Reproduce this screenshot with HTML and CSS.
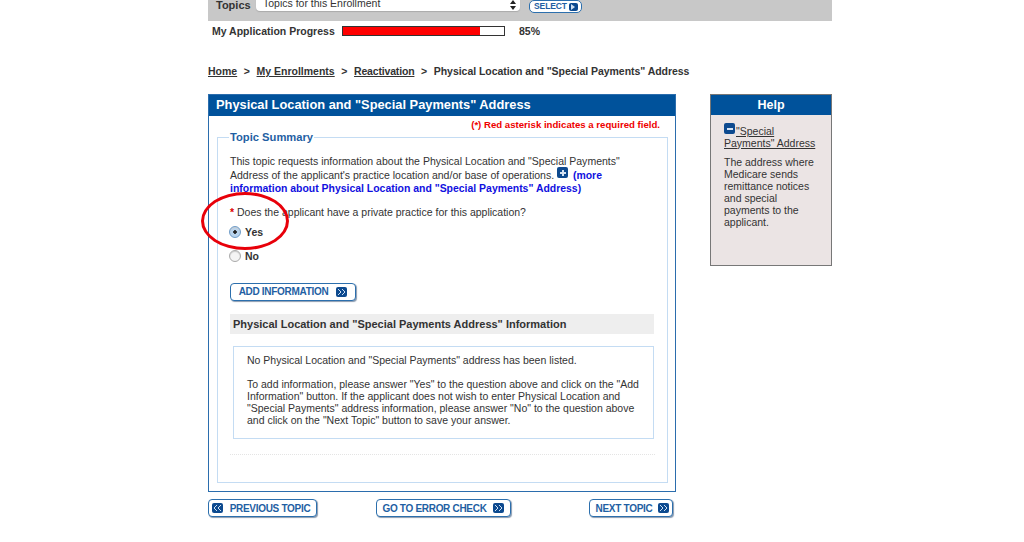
FILE: index.html

```html
<!DOCTYPE html>
<html lang="en">
<head>
    <meta charset="UTF-8">
    <title>Physical Location and "Special Payments" Address</title>
    <link rel="stylesheet" href="styles.css">
</head>
<body>
    <div class="page">
        <div class="topbar">
            <span class="topbar-label">Topics</span>
            <div class="fake-select">
                <span>Topics for this Enrollment</span>
                <svg class="updown" width="6" height="10" viewBox="0 0 6 10"><path d="M3 0l3 4H0zM3 10L0 6h6z" fill="#222"/></svg>
            </div>
            <span class="select-btn">SELECT <i class="ico ico-small"><svg width="8" height="8" viewBox="0 0 8 8"><path d="M2 1l4 3-4 3z" fill="#cfe0f2"/></svg></i></span>
        </div>

        <div class="progress-row">
            <span class="progress-label">My Application Progress</span>
            <div class="progress-track"><div class="progress-fill" style="width:85%"></div></div>
            <span class="progress-num">85%</span>
        </div>

        <div class="crumbs">
            <a href="#">Home</a><b>&gt;</b><a href="#">My Enrollments</a><b>&gt;</b><a class="crumb-tight" href="#">Reactivation</a><b>&gt;</b><span class="crumb-current">Physical Location and "Special Payments" Address</span>
        </div>

        <div class="columns">
            <div class="col-main">
                <div class="panel">
                    <h2 class="panel-title">Physical Location and "Special Payments" Address</h2>
                    <p class="req-note">(*) Red asterisk indicates a required field.</p>
                    <fieldset class="summary">
                        <legend>Topic Summary</legend>
                        <p class="intro">This topic requests information about the Physical Location and "Special Payments" Address of the applicant's practice location and/or base of operations. <i class="ico ico-mid"><svg width="8" height="8" viewBox="0 0 8 8"><path d="M3 1h2v2h2v2H5v2H3V5H1V3h2z" fill="#d5e3f3"/></svg></i> <a class="more" href="#">(more information about Physical Location and "Special Payments" Address)</a></p>
                        <p class="question"><span class="star">*</span> Does the applicant have a private practice for this application?</p>
                        <div class="radio-row"><span class="radio radio-on"></span>Yes</div>
                        <div class="radio-row radio-row-no"><span class="radio"></span>No</div>
                        <a class="btn btn-add" href="#">ADD INFORMATION <i class="ico"><svg width="9" height="8" viewBox="0 0 9 8"><path d="M1 1l3 3-3 3M5 1l3 3-3 3" fill="none" stroke="#cfe0f2"/></svg></i></a>
                        <h3 class="info-head">Physical Location and "Special Payments Address" Information</h3>
                        <div class="info-box">
                            <p>No Physical Location and "Special Payments" address has been listed.</p>
                            <p>To add information, please answer "Yes" to the question above and click on the "Add Information" button. If the applicant does not wish to enter Physical Location and "Special Payments" address information, please answer "No" to the question above and click on the "Next Topic" button to save your answer.</p>
                        </div>
                        <div class="dotted"></div>
                    </fieldset>
                </div>
                <div class="nav-btns">
                    <a class="btn btn-prev" href="#"><i class="ico"><svg width="9" height="8" viewBox="0 0 9 8"><path d="M4 1L1 4l3 3M8 1L5 4l3 3" fill="none" stroke="#cfe0f2"/></svg></i> PREVIOUS TOPIC</a>
                    <a class="btn btn-check" href="#">GO TO ERROR CHECK <i class="ico"><svg width="9" height="8" viewBox="0 0 9 8"><path d="M1 1l3 3-3 3M5 1l3 3-3 3" fill="none" stroke="#cfe0f2"/></svg></i></a>
                    <a class="btn btn-next" href="#">NEXT TOPIC <i class="ico"><svg width="9" height="8" viewBox="0 0 9 8"><path d="M1 1l3 3-3 3M5 1l3 3-3 3" fill="none" stroke="#cfe0f2"/></svg></i></a>
                </div>
            </div>

            <div class="help">
                <h2 class="help-title">Help</h2>
                <div class="help-body">
                    <p><i class="ico ico-mid"><svg width="8" height="8" viewBox="0 0 8 8"><path d="M1 3h6v2H1z" fill="#d5e3f3"/></svg></i><a href="#">"Special Payments" Address</a></p>
                    <p>The address where Medicare sends remittance notices and special payments to the applicant.</p>
                </div>
            </div>
        </div>

        <div class="red-ring"></div>
    </div>
</body>
</html>
```

FILE: styles.css

```css
html, body {
    margin: 0;
    padding: 0;
    background: #fff;
}
body {
    font-family: "Liberation Sans", Arial, sans-serif;
    font-size: 10.5px;
    color: #333;
    height: 542px;
    overflow: hidden;
}
p {
    margin: 0;
}
a {
    color: #333;
}
.page {
    position: relative;
    width: 624px;
    margin-left: 208px;
}

/* top bar */
.topbar {
    height: 21px;
    background: #c8c8c8;
    display: flex;
    align-items: flex-end;
    box-sizing: border-box;
    padding: 0 0 10px 8px;
}
.topbar-label {
    font-weight: bold;
    font-size: 11px;
    width: 40px;
    line-height: 10px;
    height: 10px;
    margin-bottom: 1px;
}
.fake-select {
    width: 264px;
    height: 12px;
    background: #fff;
    border-radius: 0 0 4px 4px;
    box-shadow: 0 1px 1px #aaa;
    display: flex;
    justify-content: space-between;
    align-items: flex-end;
    box-sizing: border-box;
    padding: 0 4px 3px 7px;
    line-height: 9px;
    margin-right: 9px;
}
.updown {
    margin-bottom: -2px;
}
.select-btn {
    height: 13px;
    width: 53px;
    box-sizing: border-box;
    margin-bottom: -2px;
    background: #fff;
    border: 1px solid #2c6fad;
    border-radius: 5px;
    color: #1f5fa3;
    font-weight: bold;
    font-size: 8.5px;
    letter-spacing: -0.1px;
    line-height: 11px;
    padding-left: 4px;
    white-space: nowrap;
    display: flex;
    align-items: center;
    gap: 2px;
}
.ico {
    display: inline-flex;
    align-items: center;
    justify-content: center;
    width: 11px;
    height: 10px;
    background: #0d4a8f;
    border-radius: 2px;
    vertical-align: middle;
}
.ico-small {
    width: 9px;
    height: 8px;
}
.ico-mid {
    width: 11px;
    height: 11px;
    vertical-align: 2px;
}

/* progress */
.progress-row {
    display: flex;
    align-items: center;
    height: 20px;
    padding-left: 4px;
}
.progress-label {
    font-weight: bold;
    width: 130px;
}
.progress-track {
    width: 161px;
    height: 8px;
    border: 1px solid #333;
    background: #fff;
}
.progress-fill {
    height: 100%;
    background: #f00;
}
.progress-num {
    font-weight: bold;
    margin-left: 14px;
}

/* breadcrumbs */
.crumbs {
    margin-top: 22px;
    height: 31px;
    line-height: 16px;
    font-weight: bold;
}
.crumbs b {
    margin: 0 6.6px;
}
.crumb-tight {
    letter-spacing: -0.17px;
}
.crumb-current {
    letter-spacing: -0.04px;
}

/* main layout */
.columns {
    display: flex;
    justify-content: space-between;
    align-items: flex-start;
}
.col-main {
    width: 468px;
}
.panel {
    border: 1px solid #2b6dad;
    box-sizing: border-box;
    height: 398px;
}
.panel-title {
    margin: 0;
    background: #00529b;
    color: #fff;
    font-size: 12.83px;
    line-height: 20px;
    padding: 0 0 1px 7px;
}
.req-note {
    color: #e00;
    font-weight: bold;
    font-size: 9.65px;
    text-align: right;
    padding-right: 15px;
    line-height: 12px;
    margin-top: 3px;
}
.summary {
    margin: 0 7px 0 8px;
    padding: 0 12px;
    border: 1px solid #c4dcf3;
    height: 352px;
    box-sizing: border-box;
    min-width: 0;
}
.summary legend {
    color: #1f5fa3;
    font-weight: bold;
    font-size: 11.2px;
    padding: 0 1px;
    margin-left: -1px;
}
.intro {
    margin-top: 11px;
    line-height: 12px;
    font-size: 10.53px;
    padding-top: 1px;
}
.intro .ico-mid {
    margin-right: 2px;
}
.more {
    color: #1010e0;
    font-weight: bold;
    font-size: 10.45px;
    text-decoration: none;
}
.question {
    margin-top: 10px;
    line-height: 14px;
}
.star {
    color: #d00;
    font-weight: bold;
}
.radio-row {
    display: flex;
    align-items: center;
    font-weight: bold;
    height: 14px;
    margin-top: 6px;
    gap: 4px;
}
.radio-row-no {
    margin-top: 10px;
}
.radio {
    width: 12px;
    height: 12px;
    box-sizing: border-box;
    border: 1px solid #aaa;
    border-radius: 50%;
    background: #f4f4f4;
    box-shadow: inset 0 1px 1px #ccc;
    margin-left: -1px;
}
.radio-on {
    border-color: #6e9cc8;
    background: radial-gradient(circle, #222 0 1.5px, #b9d4ee 2px);
}
.btn {
    display: inline-flex;
    align-items: center;
    justify-content: center;
    gap: 6px;
    height: 18px;
    box-sizing: border-box;
    background: #fff;
    border: 1px solid #2c6fad;
    border-radius: 4px;
    box-shadow: 1px 1px 1px #8a9bb0;
    color: #1f5fa3;
    font-weight: bold;
    font-size: 10px;
    letter-spacing: -0.3px;
    text-decoration: none;
    white-space: nowrap;
}
.btn-add {
    width: 126px;
    margin-top: 20px;
    display: flex;
    gap: 8px;
}
.info-head {
    margin: 13px 0 0 0;
    background: #eee;
    font-size: 11px;
    line-height: 20px;
    padding-left: 3px;
    width: 424px;
    box-sizing: border-box;
    color: #333;
}
.info-box {
    margin-top: 12px;
    width: 421px;
    height: 93px;
    box-sizing: border-box;
    border: 1px solid #c4dcf3;
    padding: 7px 12px 0 13px;
    line-height: 12px;
    margin-left: 3px;
}
.info-box p + p {
    margin-top: 12px;
}
.dotted {
    margin-top: 15px;
    width: 425px;
    border-top: 1px dotted #e4e4e4;
}
.nav-btns {
    display: flex;
    margin-top: 7px;
    padding-right: 3px;
}
.btn-prev { width: 109px; gap: 7px; padding-right: 3px; }
.btn-check { width: 135px; margin-left: 59px; padding-right: 1px; }
.btn-next { width: 84px; margin-left: auto; padding-left: 3px; }

/* help */
.help {
    width: 122px;
    height: 172px;
    box-sizing: border-box;
    border: 1px solid #777;
    background: #ebe4e4;
}
.help-title {
    margin: 0;
    background: #00529b;
    color: #fff;
    text-align: center;
    font-size: 12.5px;
    line-height: 20px;
}
.help-body {
    padding: 8px 6px 0 13px;
    line-height: 12px;
}
.help-body p + p {
    margin-top: 7px;
}
.help-body .ico-mid {
    margin-right: 1px;
}

/* annotation drawn over the screenshot */
.red-ring {
    position: absolute;
    left: -7px;
    top: 192px;
    width: 88px;
    height: 58px;
    box-sizing: border-box;
    border: 3.5px solid #e8000a;
    border-radius: 50%;
}
```
